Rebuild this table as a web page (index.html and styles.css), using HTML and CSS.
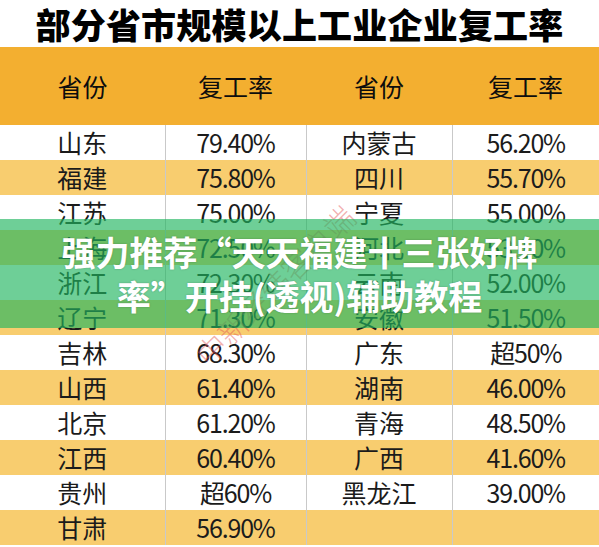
FILE: index.html
```html
<!DOCTYPE html>
<html lang="zh-CN">
<head>
    <meta charset="UTF-8">
    <meta name="viewport" content="width=device-width, initial-scale=1.0">
    <title>部分省市规模以上工业企业复工率</title>
    <link rel="stylesheet" href="styles.css">
</head>
<body>
    <div class="page">
        <h1 class="title">部分省市规模以上工业企业复工率</h1>

        <div class="sheet">
            <table class="rates">
                <colgroup>
                    <col class="c1"><col class="c2"><col class="c3"><col class="c4">
                </colgroup>
                <thead>
                    <tr>
                        <th>省份</th><th>复工率</th><th>省份</th><th>复工率</th>
                    </tr>
                </thead>
                <tbody>
                    <tr><td>山东</td><td class="num">79.40%</td><td>内蒙古</td><td class="num">56.20%</td></tr>
                    <tr><td>福建</td><td class="num">75.80%</td><td>四川</td><td class="num">55.70%</td></tr>
                    <tr><td>江苏</td><td class="num">75.00%</td><td>宁夏</td><td class="num">55.00%</td></tr>
                    <tr><td>上海</td><td class="num">72.50%</td><td>河北</td><td class="num">53.10%</td></tr>
                    <tr><td>浙江</td><td class="num">72.30%</td><td>云南</td><td class="num">52.00%</td></tr>
                    <tr><td>辽宁</td><td class="num">71.30%</td><td>安徽</td><td class="num">51.50%</td></tr>
                    <tr><td>吉林</td><td class="num">68.30%</td><td>广东</td><td class="num">超50%</td></tr>
                    <tr><td>山西</td><td class="num">61.40%</td><td>湖南</td><td class="num">46.00%</td></tr>
                    <tr><td>北京</td><td class="num">61.20%</td><td>青海</td><td class="num">48.50%</td></tr>
                    <tr><td>江西</td><td class="num">60.40%</td><td>广西</td><td class="num">41.60%</td></tr>
                    <tr><td>贵州</td><td class="num">超60%</td><td>黑龙江</td><td class="num">39.00%</td></tr>
                    <tr><td>甘肃</td><td class="num">56.90%</td><td></td><td></td></tr>
                </tbody>
            </table>

            <!-- faint stamp across the middle of the sheet -->
            <span class="stamp">中新经纬客户端</span>

            <div class="banner">
                <p>强力推荐“天天福建十三张好牌率”开挂(透视)辅助教程</p>
            </div>
        </div>
    </div>
</body>
</html>
```

FILE: styles.css
```css
body {
    margin: 0;
    background: #ffffff;
    font-family: "Noto Sans CJK SC", "Noto Sans", sans-serif;
    color: #1b1b1b;
}
.page {
    width: 599px;
    height: 547px;
    overflow: hidden;
}
.title {
    margin: 0;
    height: 47px;
    line-height: 48px;
    font-size: 35px;
    font-weight: 900;
    text-align: center;
    color: #000000;
    letter-spacing: 0.2px;
}
.sheet {
    position: relative;
}
.rates {
    width: 599px;
    border-collapse: collapse;
    table-layout: fixed;
}
.c1 { width: 165px; }
.c2 { width: 141px; }
.c3 { width: 146px; }
.c4 { width: 147px; }
.rates th {
    height: 78px;
    padding: 0;
    background: #f3af30;
    font-size: 25px;
    font-weight: 400;
    color: #0d0d0d;
}
.rates td {
    height: 35px;
    padding: 0;
    text-align: center;
    font-size: 25px;
    line-height: 35px;
    border-left: 1px solid #c9c9c9;
}
.rates td:first-child {
    border-left: none;
}
.rates tbody tr:nth-child(even) td {
    background: #f8cd6f;
}
.num {
    font-size: 24px;
    letter-spacing: -1.2px;
}
.stamp {
    position: absolute;
    left: 200px;
    top: 290px;
    font-size: 30px;
    font-weight: 300;
    color: rgba(226, 80, 80, 0.45);
    transform: rotate(-45deg);
    transform-origin: left center;
    white-space: nowrap;
}
.banner {
    position: absolute;
    left: 0;
    right: 0;
    top: 172px;
    height: 109px;
    background: rgba(32, 182, 96, 0.65);
    padding-top: 11px;
    box-sizing: border-box;
}
.banner p {
    margin: 0 auto;
    max-width: 490px;
    font-size: 34px;
    font-weight: 700;
    line-height: 44px;
    text-align: center;
    color: #ffffff;
    text-shadow: 0 0 2px rgba(0, 0, 0, 0.25);
}
```
